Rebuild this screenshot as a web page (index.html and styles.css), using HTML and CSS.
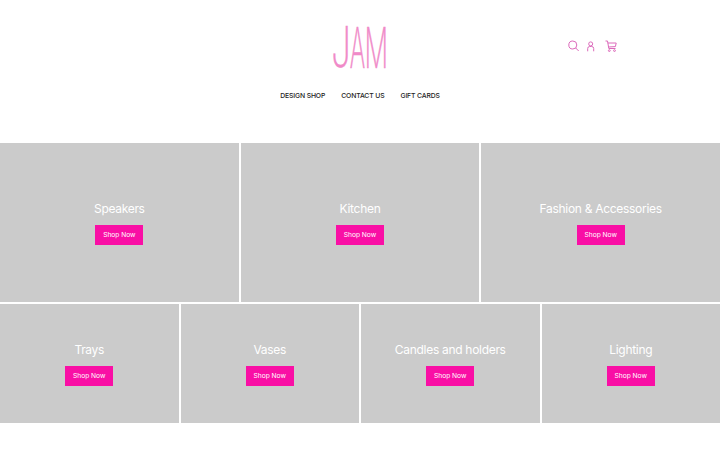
FILE: index.html
```
<!DOCTYPE html>
<html lang="en">
<head>
  <meta charset="UTF-8" />
  <meta name="viewport" content="width=device-width, initial-scale=1.0"/>
  <title>JAM</title>
  <link rel="stylesheet" href="styles.css">
</head>
<body>

  <header class="header">
    <div class="header-top">
      <a class="logo" aria-label="JAM">
        <svg width="60" height="50" viewBox="0 0 60 50">
          <text class="logo-letter" transform="translate(1.300 44) scale(.62 1)">J</text>
          <text class="logo-letter" transform="translate(19.800 44.500) scale(.42 1)">A</text>
          <text class="logo-letter" transform="translate(34.500 44.500) scale(.47 1)">M</text>
        </svg>
      </a>
      <div class="icons">
        <svg width="12" height="12" viewBox="0 0 12 12">
          <circle cx="4.800" cy="5" r="4"/>
          <path d="M7.700 8l3 3"/>
        </svg>
        <svg width="12" height="12" viewBox="0 0 12 12">
          <circle cx="5.700" cy="3.900" r="2"/>
          <path d="M2.700 11.300V8.500a2 2 0 0 1 2-2h2a2 2 0 0 1 2 2V11.300"/>
        </svg>
        <svg width="12" height="12" viewBox="0 0 12 12">
          <path d="M.500 1h2l1.300 7.500h6.700M2.900 3h8.300l-.8 3.600-6.900.4"/>
          <circle cx="4.300" cy="10.600" r=".9"/>
          <circle cx="9.500" cy="10.600" r=".9"/>
        </svg>
      </div>
    </div>
    <nav class="nav">
      <a>DESIGN SHOP</a>
      <a>CONTACT US</a>
      <a>GIFT CARDS</a>
    </nav>
  </header>

  <main class="collections">
    <div class="row row-three">
      <div class="tile"><h2>Speakers</h2><a class="btn">Shop Now</a></div>
      <div class="tile"><h2>Kitchen</h2><a class="btn">Shop Now</a></div>
      <div class="tile"><h2>Fashion &amp; Accessories</h2><a class="btn">Shop Now</a></div>
    </div>
    <div class="row row-four">
      <div class="tile"><h2>Trays</h2><a class="btn">Shop Now</a></div>
      <div class="tile"><h2>Vases</h2><a class="btn">Shop Now</a></div>
      <div class="tile"><h2>Candles and holders</h2><a class="btn">Shop Now</a></div>
      <div class="tile"><h2>Lighting</h2><a class="btn">Shop Now</a></div>
    </div>
  </main>

</body>
</html>
```
FILE: styles.css
```
* {
  box-sizing: border-box;
}

body {
  margin: 0;
  background: #fff;
  font-family: Inter, "Liberation Sans", sans-serif;
  overflow: hidden;
}

.header {
  height: 143px;
  padding-top: 23px;
}

.header-top {
  display: grid;
  grid-template-columns: 1fr 60px 1fr;
  height: 50px;
}

.logo {
  grid-column: 2;
  display: block;
  height: 50px;
}

.logo svg {
  overflow: visible;
}

.logo-letter {
  font-size: 56px;
  font-weight: 200;
  fill: #f08ac8;
  stroke: #f08ac8;
  stroke-width: 0.5px;
  vector-effect: non-scaling-stroke;
}

.icons {
  display: flex;
  gap: 5px;
  padding: 17px 0 0 178px;
}

.icons svg {
  fill: none;
  stroke: #dc6abb;
  stroke-width: 1;
}

.icons svg:last-child {
  margin-left: 3px;
}

.nav {
  display: flex;
  justify-content: center;
  gap: 16px;
  margin-top: 18px;
  font-size: 6.8px;
  line-height: 10px;
  font-weight: 500;
  letter-spacing: -0.12px;
  color: #222;
}

.row {
  display: grid;
  gap: 2px;
}

.row-three {
  grid-template-columns: repeat(3, 1fr);
  height: 159px;
  margin-bottom: 2px;
}

.row-four {
  grid-template-columns: repeat(4, 1fr);
  height: 119px;
}

.tile {
  display: flex;
  flex-direction: column;
  align-items: center;
  justify-content: center;
  background: #cbcbcb;
}

h2 {
  margin: 0 0 8px;
  font-size: 12px;
  line-height: 16px;
  font-weight: 400;
  letter-spacing: -0.3px;
  color: #fff;
}

.btn {
  width: 48px;
  height: 20px;
  background: #f90fa5;
  color: #fff;
  font-size: 6.7px;
  line-height: 20px;
  letter-spacing: -0.04px;
  text-align: center;
}
```
